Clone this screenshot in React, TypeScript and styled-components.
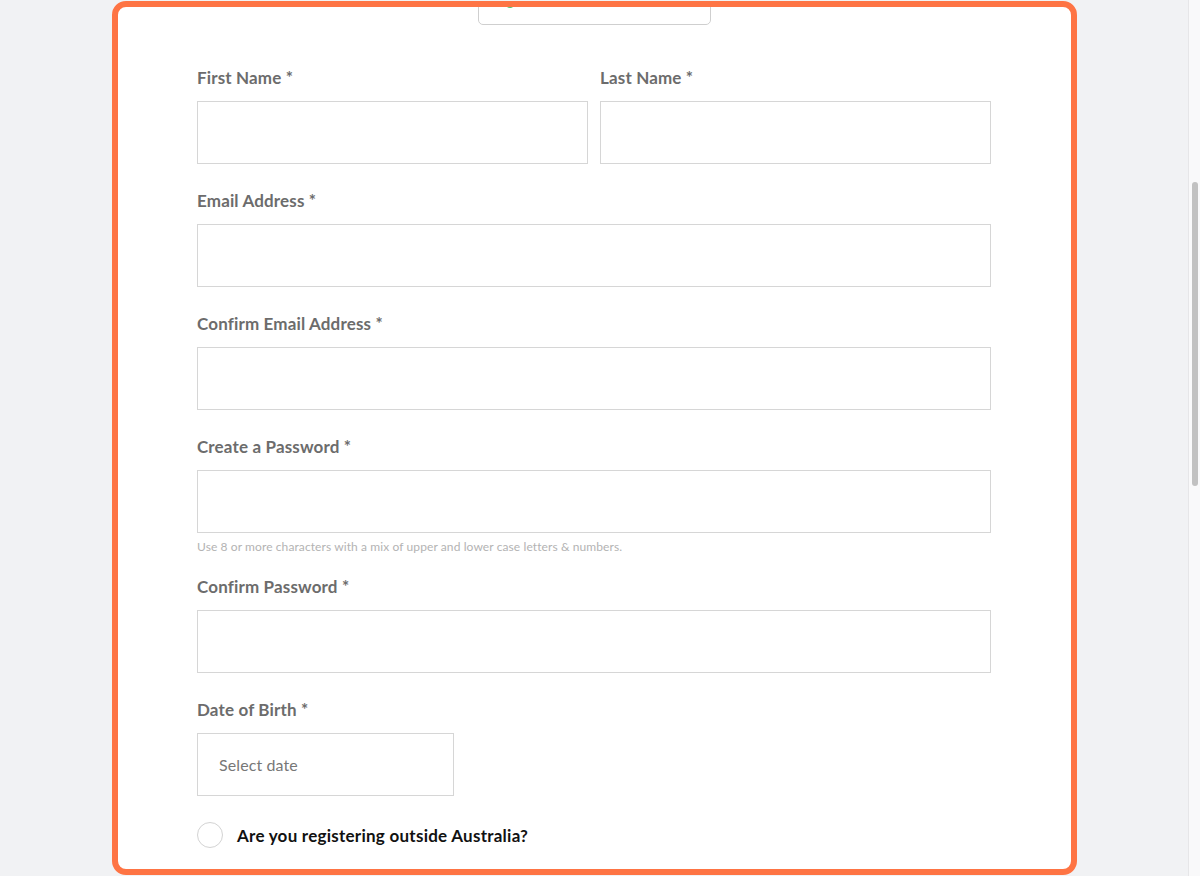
import styled, { createGlobalStyle } from 'styled-components';

const GlobalStyle = createGlobalStyle`
  html, body {
    margin: 0;
    padding: 0;
    height: 100%;
    overflow: hidden;
  }
  body {
    font-family: Lato, "Noto Sans", sans-serif;
    background: #f1f2f4;
  }
  * {
    box-sizing: border-box;
  }
`;

const Page = styled.div`
  display: flex;
  height: 876px;
`;

const Viewport = styled.div`
  flex: 1;
  overflow: hidden;
  background: #f1f2f4;
  padding-top: 1px;
`;

const Track = styled.div`
  width: 12px;
  height: 876px;
  background: #f9f9fa;
  border-left: 1px solid #e6e6e8;
  padding: 0 2px 0 3px;
`;

const Thumb = styled.div`
  margin-top: 182px;
  height: 304px;
  border-radius: 3px;
  background: #c1c1c1;
`;

const Card = styled.div`
  width: 965px;
  height: 874px;
  margin: 0 auto;
  background: #fff;
  border: 6px solid #fe7444;
  border-radius: 14px;
  overflow: hidden;
`;

const TopTab = styled.div`
  width: 233px;
  height: 40px;
  margin: -22px auto 0;
  border: 1px solid #cfcfcf;
  border-radius: 5px;
  padding: 12px 0 0 26px;
`;

const StatusDot = styled.span`
  display: block;
  width: 10px;
  height: 10px;
  border-radius: 50%;
  background: #4cc36b;
`;

const Form = styled.form`
  width: 794px;
  margin: 42px auto 0;
`;

const NameRow = styled.div`
  display: grid;
  grid-template-columns: 1fr 1fr;
  column-gap: 12px;
`;

const Field = styled.div`
  margin-bottom: 26px;
`;

const Label = styled.label`
  display: block;
  padding-top: 1px;
  font-size: 17px;
  line-height: 20px;
  font-weight: 700;
  letter-spacing: 0.15px;
  color: #6c6c6c;
  margin-bottom: 13px;
`;

const TextInput = styled.input<{ $width?: number }>`
  display: block;
  width: ${(p) => (p.$width ? `${p.$width}px` : '100%')};
  height: 63px;
  border: 1px solid #d6d6d6;
  border-radius: 0;
  padding: 0 21px;
  font-family: Lato, "Noto Sans", sans-serif;
  font-size: 16px;
  letter-spacing: 0.1px;
  color: #333;
  background: #fff;
  outline: none;

  &::placeholder {
    color: #777;
  }
`;

const Hint = styled.p`
  margin: 7px 0 -4px;
  font-size: 12px;
  line-height: 14px;
  letter-spacing: 0.1px;
  color: #b3b3b3;
`;

const RadioRow = styled.label`
  display: flex;
  align-items: center;
  gap: 14px;
  cursor: pointer;
`;

const RadioCircle = styled.span`
  width: 26px;
  height: 26px;
  border-radius: 50%;
  border: 1px solid #d3d3d3;
  background: #fff;
`;

const RadioText = styled.span`
  font-size: 17px;
  font-weight: 700;
  letter-spacing: 0.25px;
  color: #111;
`;

type FieldDef = {
  label: string;
  type: string;
  hint?: string;
};

const fields: FieldDef[] = [
  { label: 'Email Address *', type: 'email' },
  { label: 'Confirm Email Address *', type: 'email' },
  {
    label: 'Create a Password *',
    type: 'password',
    hint: 'Use 8 or more characters with a mix of upper and lower case letters & numbers.',
  },
  { label: 'Confirm Password *', type: 'password' },
];

const App = () => {
  return (
    <>
      <GlobalStyle />
      <Page>
        <Viewport>
          <Card>
            <TopTab>
              <StatusDot />
            </TopTab>
            <Form onSubmit={(e) => e.preventDefault()}>
              <NameRow>
                <Field>
                  <Label>First Name *</Label>
                  <TextInput type="text" />
                </Field>
                <Field>
                  <Label>Last Name *</Label>
                  <TextInput type="text" />
                </Field>
              </NameRow>

              {fields.map((field) => (
                <Field key={field.label}>
                  <Label>{field.label}</Label>
                  <TextInput type={field.type} />
                  {field.hint && <Hint>{field.hint}</Hint>}
                </Field>
              ))}

              <Field>
                <Label>Date of Birth *</Label>
                <TextInput type="text" placeholder="Select date" $width={257} />
              </Field>

              <RadioRow>
                <RadioCircle />
                <RadioText>Are you registering outside Australia?</RadioText>
              </RadioRow>
            </Form>
          </Card>
        </Viewport>
        <Track>
          <Thumb />
        </Track>
      </Page>
    </>
  );
};

export default App;
